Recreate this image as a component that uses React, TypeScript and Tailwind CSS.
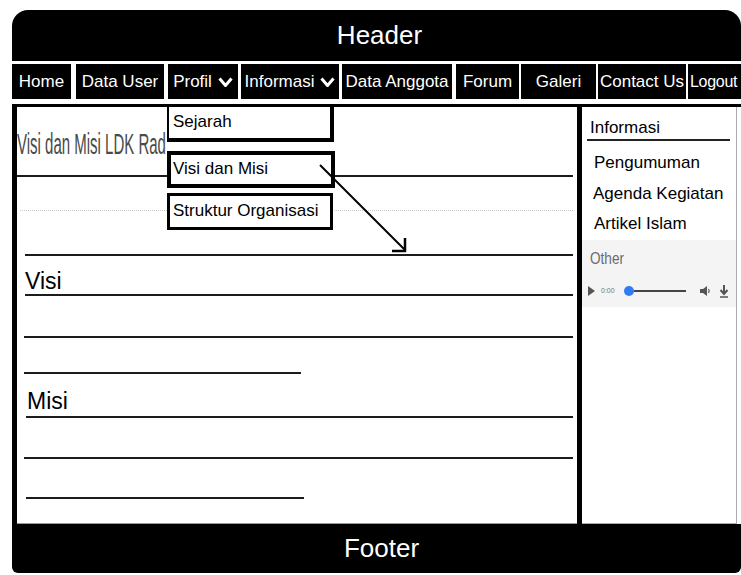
import React from 'react';

function Chevron() {
  return (
    <svg width="15" height="10" viewBox="0 0 15 10" className="ml-[6px] shrink-0">
      <polyline points="1.5,1.5 7.5,8.5 13.5,1.5" fill="none" stroke="white" strokeWidth="3" />
    </svg>
  );
}

const navItems = [
  { label: 'Home', w: 'w-[59px]', ml: '' },
  { label: 'Data User', w: 'w-[88px]', ml: 'ml-[5px]' },
  { label: 'Profil', w: 'w-[70px]', ml: 'ml-[4px]', chevron: true },
  { label: 'Informasi', w: 'w-[98px]', ml: 'ml-[3px]', chevron: true },
  { label: 'Data Anggota', w: 'w-[110px]', ml: 'ml-[3px]' },
  { label: 'Forum', w: 'w-[63px]', ml: 'ml-[4px]' },
  { label: 'Galeri', w: 'w-[75px]', ml: 'ml-[2px]' },
  { label: 'Contact Us', w: 'w-[88px]', ml: 'ml-[2px]' },
];

function Rule({ className }: { className: string }) {
  return <div className={`h-[2px] bg-[#1c1c1c] ${className}`} />;
}

export default function App() {
  return (
    <div className="relative w-[741px] h-[575px] overflow-hidden bg-white font-['Liberation_Sans',Arial,sans-serif] text-black">
      <div className="ml-[12px] pt-[10px] flex flex-col w-[729px]">
        {/* Header */}
        <div className="h-[51px] bg-black rounded-t-[16px] flex items-center justify-center text-white text-[26px] pl-[6px]">
          Header
        </div>

        {/* Nav */}
        <div className="mt-[3px] h-[35px] flex">
          {navItems.map((n) => (
            <div
              key={n.label}
              className={`${n.w} ${n.ml} shrink-0 bg-black text-white text-[17px] flex items-center justify-center whitespace-nowrap`}
            >
              <span>{n.label}</span>
              {n.chevron && <Chevron />}
            </div>
          ))}
          <div className="ml-[2px] flex-1 bg-black text-white text-[16px] flex items-center pl-[2px] whitespace-nowrap tracking-[-0.3px]">
            Logout
          </div>
        </div>

        {/* Content */}
        <div className="mt-[5px] h-[420px] border-t-[3px] border-l-[5px] border-black flex">
          {/* Main */}
          <div className="w-[560px] flex flex-col border-b border-[#999]">
            <div className="h-[68px] flex items-center pt-[6px] w-[150px] overflow-hidden">
              <span className="text-[30px] leading-[34px] text-[#4a4a4a] whitespace-nowrap origin-left scale-x-[0.5] inline-block">
                Visi dan Misi LDK Rad
              </span>
            </div>
            <Rule className="mr-[4px]" />
            <div className="mt-[33px] ml-[3px] mr-[4px] border-t border-dotted border-[#c8c8c8]" />
            <Rule className="mt-[43px] ml-[8px] mr-[4px]" />
            <div className="h-[38px] flex items-end pl-[8px] text-[23px] leading-[26px]">Visi</div>
            <Rule className="ml-[8px] mr-[4px]" />
            <Rule className="mt-[40px] ml-[7px] mr-[4px]" />
            <Rule className="mt-[34px] ml-[7px] w-[277px]" />
            <div className="h-[42px] flex items-end pb-[2px] pl-[10px] text-[23px] leading-[26px]">Misi</div>
            <Rule className="ml-[9px] mr-[4px]" />
            <Rule className="mt-[39px] ml-[7px] mr-[4px]" />
            <Rule className="mt-[38px] ml-[9px] w-[278px]" />
          </div>

          {/* Divider */}
          <div className="w-[5px] bg-black" />

          {/* Sidebar */}
          <div className="w-[155px] flex flex-col border-r border-b border-[#aaa]">
            <div className="pt-[11px] pl-[8px] text-[17px] leading-[20px]">Informasi</div>
            <div className="mt-[1px] ml-[5px] mr-[6px] h-[2px] bg-[#222]" />
            <div className="mt-[12px] pl-[12px] text-[17px] leading-[20px]">Pengumuman</div>
            <div className="mt-[11px] pl-[11px] text-[17px] leading-[20px]">Agenda Kegiatan</div>
            <div className="mt-[10px] pl-[12px] text-[17px] leading-[20px]">Artikel Islam</div>
            <div className="mt-[6px] h-[67px] bg-[#f4f4f4] flex flex-col">
              <div className="pt-[7px] pl-[8px] h-[27px]">
                <span className="inline-block text-[17px] leading-[20px] text-[#6b6b6b] origin-left scale-x-[0.8]">Other</span>
              </div>
              <div className="mt-[17px] h-[14px] flex items-center pl-[6px]">
                <svg width="7" height="10" viewBox="0 0 7 10">
                  <polygon points="0,0 7,5 0,10" fill="#555" />
                </svg>
                <span className="ml-[6px] text-[7px] text-[#777]">0:00</span>
                <div className="ml-[9px] w-[10px] h-[10px] rounded-full bg-[#2f7cf6]" />
                <div className="w-[52px] h-[2px] bg-[#444]" />
                <svg width="12" height="12" viewBox="0 0 12 12" className="ml-[13px]">
                  <polygon points="1,4 4,4 8,1 8,11 4,8 1,8" fill="#555" />
                  <path d="M9.5 4 Q11 6 9.5 8" stroke="#555" strokeWidth="1.2" fill="none" />
                </svg>
                <svg width="10" height="14" viewBox="0 0 10 14" className="ml-[8px]">
                  <line x1="5" y1="1" x2="5" y2="9" stroke="#555" strokeWidth="2" />
                  <polyline points="1.5,6 5,10 8.5,6" fill="none" stroke="#555" strokeWidth="2" />
                  <line x1="1" y1="13" x2="9" y2="13" stroke="#555" strokeWidth="1.5" />
                </svg>
              </div>
            </div>
          </div>
        </div>

        {/* Footer */}
        <div className="h-[49px] bg-black rounded-b-[6px] flex items-center justify-center text-white text-[26px] pl-[10px]">
          Footer
        </div>
      </div>

      {/* Profil dropdown overlay */}
      <div className="absolute left-[167px] top-[107px] w-[167px] h-[35px] bg-white border-l-2 border-r-4 border-b-4 border-black text-[17px] pl-[4px] pt-[5px] leading-[20px]">
        Sejarah
      </div>
      <div className="absolute left-[167px] top-[151px] w-[168px] h-[37px] bg-white border-4 border-black text-[17px] pl-[2px] pt-[4px] leading-[20px]">
        Visi dan Misi
      </div>
      <div className="absolute left-[167px] top-[193px] w-[166px] h-[37px] bg-white border-[3px] border-black text-[17px] pl-[3px] pt-[5px] leading-[20px] whitespace-nowrap">
        Struktur Organisasi
      </div>

      {/* Arrow annotation */}
      <svg className="absolute left-0 top-0" width="741" height="575" viewBox="0 0 741 575">
        <line x1="320" y1="165" x2="405" y2="250" stroke="black" strokeWidth="2" />
        <polyline points="405,238 405,251 392,251" fill="none" stroke="black" strokeWidth="2.5" />
      </svg>
    </div>
  );
}
